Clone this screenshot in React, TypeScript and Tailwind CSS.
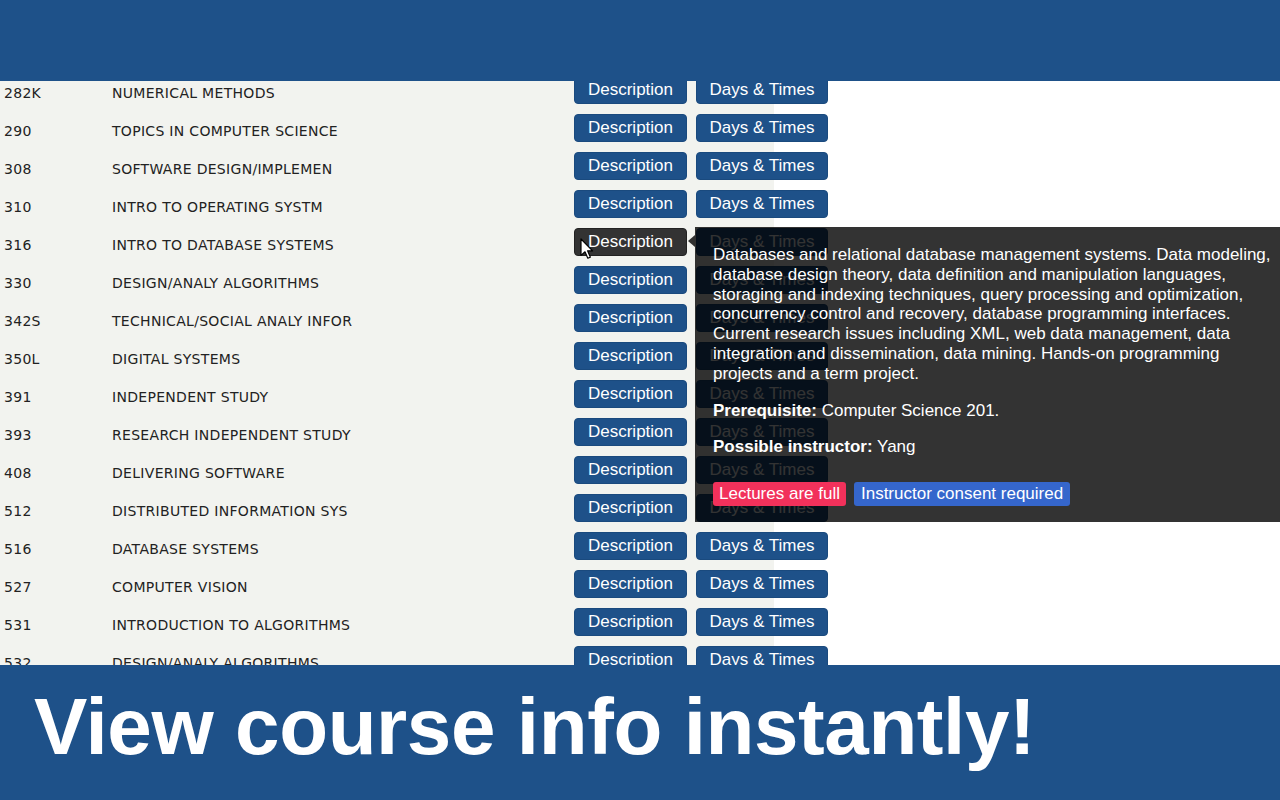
const COURSES = [
  { code: "282K", title: "NUMERICAL METHODS" },
  { code: "290", title: "TOPICS IN COMPUTER SCIENCE" },
  { code: "308", title: "SOFTWARE DESIGN/IMPLEMEN" },
  { code: "310", title: "INTRO TO OPERATING SYSTM" },
  { code: "316", title: "INTRO TO DATABASE SYSTEMS", hovered: true },
  { code: "330", title: "DESIGN/ANALY ALGORITHMS" },
  { code: "342S", title: "TECHNICAL/SOCIAL ANALY INFOR" },
  { code: "350L", title: "DIGITAL SYSTEMS" },
  { code: "391", title: "INDEPENDENT STUDY" },
  { code: "393", title: "RESEARCH INDEPENDENT STUDY" },
  { code: "408", title: "DELIVERING SOFTWARE" },
  { code: "512", title: "DISTRIBUTED INFORMATION SYS" },
  { code: "516", title: "DATABASE SYSTEMS" },
  { code: "527", title: "COMPUTER VISION" },
  { code: "531", title: "INTRODUCTION TO ALGORITHMS" },
  { code: "532", title: "DESIGN/ANALY ALGORITHMS" },
];

const DESCRIPTION_LINES = [
  "Databases and relational database management systems. Data modeling,",
  "database design theory, data definition and manipulation languages,",
  "storaging and indexing techniques, query processing and optimization,",
  "concurrency control and recovery, database programming interfaces.",
  "Current research issues including XML, web data management, data",
  "integration and dissemination, data mining. Hands-on programming",
  "projects and a term project.",
];

function Cursor() {
  return (
    <svg className="absolute left-[5px] top-[9px] pointer-events-none" width="14" height="22" viewBox="0 0 14 22">
      <path d="M1 1 L1 17.5 L5 13.8 L7.8 20.2 L10.3 19.1 L7.6 12.8 L12.6 12.8 Z" fill="#fff" stroke="#000" strokeWidth="1.2" strokeLinejoin="round" />
    </svg>
  );
}

function Tooltip() {
  return (
    <div className="absolute left-[695px] top-[146px] w-[620px] bg-black/80 text-white pl-[18px] pr-4 pt-[18px] pb-[16px] font-['Liberation_Sans',Arial,sans-serif] text-[17px] leading-[19.8px] z-10">
      {/* arrow pointing back at the hovered button */}
      <div className="absolute -left-[7px] top-[8px] w-0 h-0 border-y-[6px] border-y-transparent border-r-[7px] border-r-black/80" />
      <div>
        {DESCRIPTION_LINES.map((line) => (
          <div key={line} className="whitespace-nowrap">{line}</div>
        ))}
      </div>
      <p className="mt-[17px]">
        <b>Prerequisite:</b> Computer Science 201.
      </p>
      <p className="mt-[17px]">
        <b>Possible instructor:</b> Yang
      </p>
      <div className="mt-[25px] flex gap-2">
        <span className="h-[24px] leading-[24px] px-[6px] rounded-[3px] bg-[#f2315b]">Lectures are full</span>
        <span className="h-[24px] leading-[24px] px-[7px] rounded-[3px] bg-[#3566cc]">Instructor consent required</span>
      </div>
    </div>
  );
}

export default function App() {
  return (
    <div className="w-[1280px] h-[800px] flex flex-col bg-white overflow-hidden">
      <div className="h-[81px] bg-[#1e5189] shrink-0" />

      {/* scrolled course table */}
      <div className="relative h-[584px] overflow-hidden">
        <div className="-mt-[10px] w-[774px] bg-[#f2f3ef]">
          {COURSES.map((c) => (
            <div key={c.code} className="h-[38px] flex items-center">
              <span className="mt-[7px] w-[112px] pl-[4px] shrink-0 font-['DejaVu_Sans',Verdana,sans-serif] text-[14px] tracking-[0.3px] text-[#222]">
                {c.code}
              </span>
              <span className="mt-[7px] w-[462px] shrink-0 font-['DejaVu_Sans',Verdana,sans-serif] text-[14px] tracking-[0.3px] text-[#222]">
                {c.title}
              </span>
              <div className="flex gap-[9px] shrink-0 font-['Liberation_Sans',Arial,sans-serif] text-[17px] text-white">
                <div
                  className={
                    c.hovered
                      ? "relative w-[113px] h-[28px] rounded-[4px] bg-[#333] border border-[#222] flex items-center justify-center"
                      : "w-[113px] h-[28px] rounded-[4px] bg-[#1e5189] border border-[#1a4a7e] flex items-center justify-center"
                  }
                >
                  Description
                  {c.hovered && <Cursor />}
                </div>
                <div className="w-[132px] h-[28px] rounded-[4px] bg-[#1e5189] border border-[#1a4a7e] flex items-center justify-center">
                  Days &amp; Times
                </div>
              </div>
            </div>
          ))}
        </div>
        <Tooltip />
      </div>

      <div className="flex-1 bg-[#1e5189] pt-[22px] pl-[34px]">
        <h1 className="font-['Liberation_Sans',Arial,sans-serif] font-bold text-[80px] leading-[80px] tracking-[-0.4px] text-white whitespace-nowrap">
          View course info instantly!
        </h1>
      </div>
    </div>
  );
}
